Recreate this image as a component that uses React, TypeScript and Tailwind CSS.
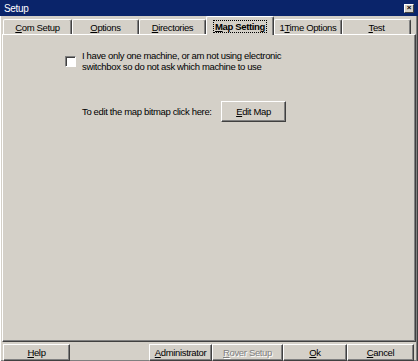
import React from 'react'

const FONT = "font-['Liberation_Sans',Arial,sans-serif]"

type Tab = { label: React.ReactNode; w: string; active?: boolean }

const tabs: Tab[] = [
  { label: <><u>C</u>om Setup</>, w: 'w-[69px]' },
  { label: <><u>O</u>ptions</>, w: 'w-[67px]' },
  { label: <><u>D</u>irectories</>, w: 'w-[67px]' },
  { label: <><u>M</u>ap Setting</>, w: 'w-[68px]', active: true },
  { label: <>1<u>T</u>ime Options</>, w: 'w-[68px]' },
  { label: <><u>T</u>est</>, w: 'w-[69px]' },
]

function ClassicButton({
  children,
  className = '',
  disabled,
}: {
  children: React.ReactNode
  className?: string
  disabled?: boolean
}) {
  return (
    <button
      type="button"
      className={`flex items-center justify-center whitespace-nowrap border border-t-white border-l-white border-r-[#404040] border-b-[#404040] bg-[#d4d0c8] shadow-[inset_-1px_-1px_#808080] ${
        disabled ? 'text-[#808080] [text-shadow:1px_1px_#ffffff]' : 'text-black'
      } ${className}`}
    >
      {children}
    </button>
  )
}

export default function App() {
  return (
    <div
      className={`${FONT} flex h-[361px] w-[418px] flex-col overflow-hidden bg-[#d4d0c8] text-[9.5px] leading-[11px] tracking-[-0.35px] text-black`}
    >
      {/* Title bar */}
      <div className="flex h-[16px] shrink-0 items-center justify-between bg-[#0a246a] pl-[4px] pr-[4px]">
        <span className="text-[10px] text-white">Setup</span>
        <span className="flex h-[9px] w-[10px] items-center justify-center border border-t-white border-l-white border-r-[#404040] border-b-[#404040] bg-[#d4d0c8] text-[8px] font-bold leading-none">
          ×
        </span>
      </div>

      {/* Body with window frame */}
      <div className="flex flex-1 flex-col border-l border-r border-b border-l-white border-r-[#404040] border-b-[#404040] pl-[1px] pr-[1px] shadow-[inset_-1px_-1px_#808080]">
        {/* Tab strip */}
        <div className="relative z-10 mt-[1px] flex h-[17px] items-end pl-[1px]">
          {tabs.map((t, i) =>
            t.active ? (
              <div
                key={i}
                className={`${t.w} -mb-px flex h-[19px] items-center justify-center whitespace-nowrap rounded-t-[2px] border-l border-t border-r border-l-white border-t-white border-r-[#404040] bg-[#d4d0c8] font-bold shadow-[inset_-1px_0_#808080]`}
              >
                <span className="border border-dotted border-black px-[1px] leading-[11px]">{t.label}</span>
              </div>
            ) : (
              <div
                key={i}
                className={`${t.w} flex h-[15px] items-center justify-center whitespace-nowrap rounded-t-[2px] border-l border-t border-r border-l-white border-t-white border-r-[#404040] bg-[#d4d0c8] shadow-[inset_-1px_0_#808080]`}
              >
                <span>{t.label}</span>
              </div>
            ),
          )}
        </div>

        {/* Tab panel */}
        <div className="flex h-[308px] flex-col border border-t-white border-l-white border-r-[#404040] border-b-[#404040] shadow-[inset_-1px_-1px_#808080]">
          <div className="ml-[62px] mt-[15px] flex items-start gap-[6px]">
            <span className="mt-[6px] block h-[11px] w-[11px] shrink-0 border border-t-[#808080] border-l-[#808080] border-r-white border-b-white bg-white shadow-[inset_1px_1px_#404040]" />
            <p className="w-[205px]">
              I have only one machine, or am not using electronic switchbox so do not ask which machine to use
            </p>
          </div>

          <div className="ml-[79px] mt-[29px] flex items-center">
            <span className="w-[139px] whitespace-nowrap">To edit the map bitmap click here:</span>
            <ClassicButton className="h-[21px] w-[65px]">
              <u>E</u>dit Map
            </ClassicButton>
          </div>
        </div>

        {/* Bottom buttons */}
        <div className="mt-[2px] flex h-[17px] pl-[1px] pr-[2px]">
          <ClassicButton className="h-[17px] w-[67px]">
            <u>H</u>elp
          </ClassicButton>
          <div className="flex-1" />
          <ClassicButton className="h-[17px] w-[63px]">
            <u>A</u>dministrator
          </ClassicButton>
          <ClassicButton className="h-[17px] w-[71px]" disabled>
            <u>R</u>over Setup
          </ClassicButton>
          <ClassicButton className="h-[17px] w-[64px]">
            <u>O</u>k
          </ClassicButton>
          <ClassicButton className="h-[17px] w-[67px]">
            <u>C</u>ancel
          </ClassicButton>
        </div>
      </div>
    </div>
  )
}
